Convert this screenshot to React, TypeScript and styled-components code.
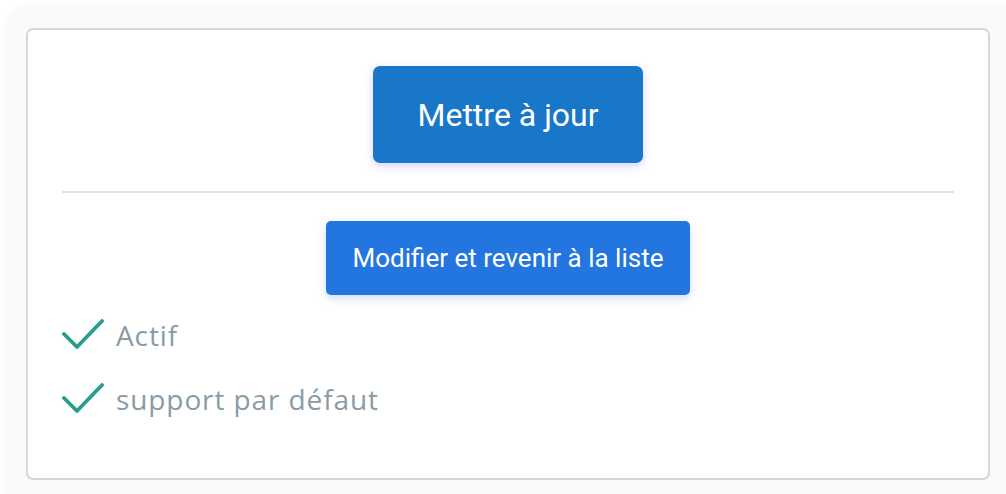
import styled, { createGlobalStyle } from 'styled-components';

const Global = createGlobalStyle`
    html, body {
        margin: 0;
        padding: 0;
        background: #ffffff;
        overflow: hidden;
    }
    * {
        box-sizing: border-box;
    }
`;

const Backdrop = styled.div`
    margin: 5px 0 0 5px;
    width: calc(100vw - 5px);
    height: calc(100vh - 5px);
    padding: 23px 0 0 21px;
    background-color: #f9f9f9;
    border-top-left-radius: 28px;
    box-shadow: 0 0 10px 2px rgba(0, 0, 0, 0.025);
`;

const Card = styled.div`
    width: 964px;
    height: 452px;
    padding: 36px 34px 0;
    background-color: #ffffff;
    border: 2px solid #cfd8dc;
    border-radius: 7px;
    display: flex;
    flex-direction: column;
    align-items: center;
`;

const Button = styled.button<{ $big?: boolean }>`
    border: none;
    color: #ffffff;
    font-family: Roboto, "Open Sans", sans-serif;
    font-weight: 400;
    cursor: pointer;
    display: flex;
    align-items: center;
    justify-content: center;
    border-radius: ${p => (p.$big ? '7px' : '5px')};
    height: ${p => (p.$big ? '97px' : '74px')};
    padding: ${p => (p.$big ? '0 44px' : '0 27px')};
    font-size: ${p => (p.$big ? '32px' : '26px')};
    background-color: ${p => (p.$big ? '#1977c9' : '#2375df')};
    box-shadow: ${p => (p.$big
        ? '0 3px 9px rgba(110, 90, 240, 0.28)'
        : '0 3px 8px rgba(60, 120, 230, 0.25)')};
`;

const Divider = styled.hr`
    align-self: stretch;
    border: none;
    height: 2px;
    background-color: #e2e2e2;
    margin: 28px 0;
`;

const Checks = styled.ul`
    align-self: stretch;
    list-style: none;
    margin: 8px 0 0;
    padding: 0;
`;

const CheckRow = styled.li`
    height: 64px;
    display: flex;
    align-items: center;
    gap: 12px;
    font-family: "Open Sans", sans-serif;
    font-size: 28px;
    letter-spacing: 0.9px;
    color: #8a9ba6;
`;

function CheckMark() {
    return (
        <svg width="42" height="32" viewBox="0 0 42 32">
            <polyline
                points="2,15 15,28 40,2"
                fill="none"
                stroke="#289d8a"
                strokeWidth="3.8"
                strokeLinecap="round"
                strokeLinejoin="round"
            />
        </svg>
    );
}

export default function App() {
    return (
        <>
            <Global />
            <Backdrop>
                <Card>
                    <Button $big>Mettre à jour</Button>
                    <Divider />
                    <Button>Modifier et revenir à la liste</Button>
                    <Checks>
                        <CheckRow><CheckMark />Actif</CheckRow>
                        <CheckRow><CheckMark />support par défaut</CheckRow>
                    </Checks>
                </Card>
            </Backdrop>
        </>
    );
}
